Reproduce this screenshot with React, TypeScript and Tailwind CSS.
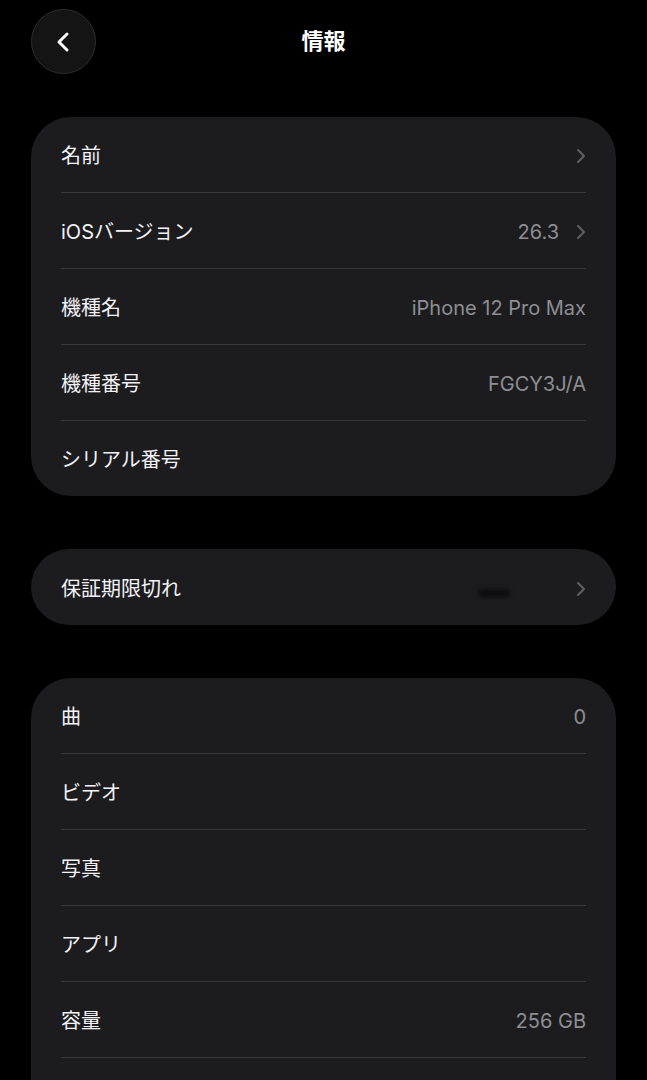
import React from 'react';

const font = "font-['Inter','Noto_Sans_CJK_JP',sans-serif]";

type Row = { label: string; value?: string; chevron?: boolean };

const Chevron = () => (
  <svg width="10" height="16" viewBox="0 0 10 16" fill="none" className="ml-[17px] shrink-0">
    <path d="M2 2l6 6-6 6" stroke="#5e5e63" strokeWidth="2" strokeLinecap="round" strokeLinejoin="round" />
  </svg>
);

const InfoRow = ({ label, value, chevron }: Row) => (
  <div className="flex h-[75px] items-center justify-between pt-[3px]">
    <span className="text-[20px] text-[#f2f2f7]">{label}</span>
    <div className="flex items-center">
      {value && <span className="text-[20px] text-[#8e8e93]">{value}</span>}
      {chevron && <Chevron />}
    </div>
  </div>
);

const Card = ({ rows, tail }: { rows: Row[]; tail?: boolean }) => (
  <div className="rounded-[40px] bg-[#1c1c1e] px-[30px]">
    {rows.map((r, i) => (
      <React.Fragment key={r.label}>
        {i > 0 && <div className="h-px bg-[#38383a]" />}
        <InfoRow {...r} />
      </React.Fragment>
    ))}
    {tail && (
      <>
        <div className="h-px bg-[#38383a]" />
        <div className="h-[75px]" />
      </>
    )}
  </div>
);

export default function App() {
  return (
    <div className={`min-h-screen bg-black px-[31px] ${font}`}>
      <div className="grid grid-cols-[1fr_auto_1fr] items-center pt-[9px]">
        <button className="flex h-[65px] w-[65px] items-center justify-center rounded-full border border-[#2e2e30] bg-[#141414]">
          <svg width="18" height="22" viewBox="0 0 18 22" fill="none">
            <path d="M12 3l-8 8 8 8" stroke="#ffffff" strokeWidth="3" strokeLinecap="round" strokeLinejoin="round" />
          </svg>
        </button>
        <h1 className="text-[22px] font-bold text-white">情報</h1>
        <div />
      </div>

      <div className="mt-[43px]">
        <Card
          rows={[
            { label: '名前', chevron: true },
            { label: 'iOSバージョン', value: '26.3', chevron: true },
            { label: '機種名', value: 'iPhone 12 Pro Max' },
            { label: '機種番号', value: 'FGCY3J/A' },
            { label: 'シリアル番号' },
          ]}
        />
      </div>

      <div className="mt-[53px] flex h-[76px] items-center justify-between rounded-full bg-[#1c1c1e] pl-[30px] pr-[30px] pt-[3px]">
        <span className="text-[20px] text-[#f2f2f7]">保証期限切れ</span>
        <div className="flex items-center">
          <div className="mr-[49px] mt-[8px] h-[8px] w-[32px] rounded-full bg-[#0d0d0f] blur-[2px]" />
          <Chevron />
        </div>
      </div>

      <div className="mt-[53px]">
        <Card
          tail
          rows={[
            { label: '曲', value: '0' },
            { label: 'ビデオ' },
            { label: '写真' },
            { label: 'アプリ' },
            { label: '容量', value: '256 GB' },
          ]}
        />
      </div>
    </div>
  );
}
